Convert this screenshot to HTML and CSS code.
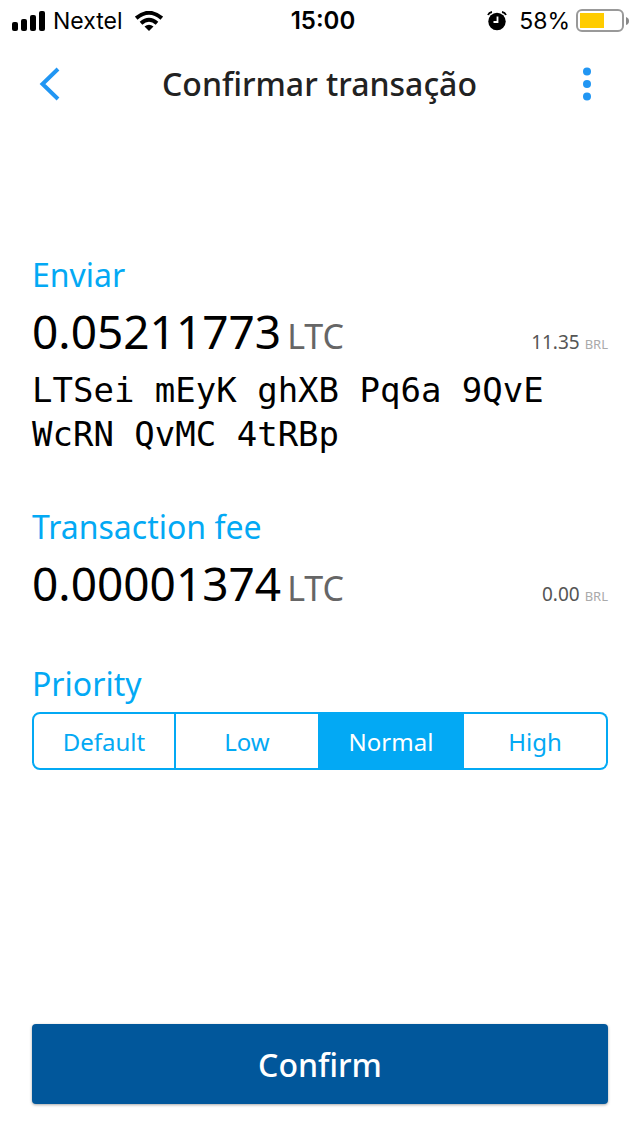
FILE: index.html
```html
<!DOCTYPE html>
<html lang="pt-BR">
<head>
<meta charset="utf-8">
<meta name="viewport" content="width=device-width, initial-scale=1">
<title>Confirmar transação</title>
<link rel="stylesheet" href="styles.css">
</head>
<body>
<div class="status">
  <div class="status-left">
    <svg class="signal" width="34" height="20" viewBox="0 0 34 20" aria-hidden="true"><rect x="0" y="11" width="6" height="9" rx="2"/><rect x="9" y="8" width="6" height="12" rx="2"/><rect x="18" y="4" width="6" height="16" rx="2"/><rect x="27" y="0" width="6" height="20" rx="2"/></svg>
    <span>Nextel</span>
    <svg class="wifi" width="28" height="20" viewBox="0 0 28 20" aria-hidden="true"><path d="M1.200 7.200Q14-3.600 26.800 7.200M6 12.200Q14 5.400 22 12.200" fill="none" stroke="#000" stroke-width="4"/><path d="M9.500 15.500Q14 12 18.500 15.500L14 20Z"/></svg>
  </div>
  <time class="clock">15:00</time>
  <div class="status-right">
    <svg class="alarm" width="20" height="20" viewBox="0 0 20 20" aria-hidden="true"><circle cx="10" cy="10.500" r="8.700"/><path d="M1 4Q2 1.500 5 1M15 1Q18 1.500 19 4" fill="none" stroke="#000" stroke-width="1.800"/><path d="M10.500 5.500V11H6.500" fill="none" stroke="#fff" stroke-width="1.800"/></svg>
    <span>58%</span>
    <svg class="battery" width="54" height="24" viewBox="0 0 54 24" aria-hidden="true"><rect x="1" y="1" width="46" height="21" rx="5" fill="none" stroke="#999" stroke-width="2"/><rect x="4" y="4" width="24" height="15" fill="#fc0"/><path d="M50 8Q53 9 53 12T50 16Z" fill="#888"/></svg>
  </div>
</div>
<header class="header">
  <button class="icon-button" type="button" aria-label="Voltar"><svg width="36" height="36" viewBox="0 0 36 36"><path d="M26 3L10.500 18L26 33" fill="none" stroke="#2196f3" stroke-width="4"/></svg></button>
  <h1 class="title">Confirmar transação</h1>
  <button class="icon-button" type="button" aria-label="Menu"><svg width="36" height="36" viewBox="0 0 36 36" fill="#2196f3"><circle cx="18" cy="5.500" r="4"/><circle cx="18" cy="18" r="4"/><circle cx="18" cy="30.500" r="4"/></svg></button>
</header>
<main class="content">
  <section class="block">
    <h2 class="label">Enviar</h2>
    <div class="row"><p class="amount">0.05211773 <span class="unit">LTC</span></p><p class="fiat">11.35 <span class="currency">BRL</span></p></div>
    <p class="address">LTSei mEyK ghXB Pq6a 9QvE WcRN QvMC 4tRBp</p>
  </section>
  <section class="block">
    <h2 class="label">Transaction fee</h2>
    <div class="row"><p class="amount">0.00001374 <span class="unit">LTC</span></p><p class="fiat">0.00 <span class="currency">BRL</span></p></div>
  </section>
  <section class="block">
    <h2 class="label" id="priority">Priority</h2>
    <div class="segments" role="radiogroup" aria-labelledby="priority">
      <label class="segment"><input type="radio" name="priority"><span>Default</span></label>
      <label class="segment"><input type="radio" name="priority"><span>Low</span></label>
      <label class="segment"><input type="radio" name="priority" checked><span>Normal</span></label>
      <label class="segment"><input type="radio" name="priority"><span>High</span></label>
    </div>
  </section>
</main>
<footer class="footer"><button class="confirm" type="button">Confirm</button></footer>
</body>
</html>
```

FILE: styles.css
```css
* { box-sizing: border-box; }
body { margin: 0; min-height: 100vh; display: flex; flex-direction: column; background: #fff; color: #000; font-family: "Noto Sans", sans-serif; }
h1, h2, p { margin: 0; font-weight: 400; }
button { border: 0; padding: 0; background: none; font: inherit; cursor: pointer; }
svg { display: block; flex: none; }

.status { display: grid; grid-template-columns: 1fr auto 1fr; align-items: center; height: 40px; padding: 0 10px 0 12px; font: 23px/42px Inter, sans-serif; }
.status-left, .status-right { display: flex; align-items: center; gap: 7px; height: 40px; }
.status-right { justify-content: flex-end; gap: 6px; }
.wifi { margin-left: 5px; }
.alarm { margin-right: 6px; }
.clock { font-size: 24px; font-weight: 600; padding-left: 4px; }

.header { display: grid; grid-template-columns: 36px 1fr 36px; align-items: center; height: 88px; padding: 0 35px 0 32px; }
.title { padding-left: 2px; text-align: center; font-size: 32px; font-weight: 500; line-height: 48px; color: #222; }

.content { flex: 1; padding: 123px 32px 0; }
.block { margin-bottom: 40px; }
.label { font-size: 32px; line-height: 48px; color: #03a9f4; }
.row { display: flex; justify-content: space-between; align-items: baseline; }
.amount { display: flex; align-items: baseline; gap: 6px; font-size: 46px; line-height: 64px; }
.unit { font-size: 34px; color: #666; }
.fiat { font-size: 19px; color: #555; }
.currency { font-size: 13px; color: #aaa; }
.address { margin-bottom: 47px; font: 34px/44px "DejaVu Sans Mono", monospace; }

.segments { display: grid; grid-template-columns: repeat(4, 1fr); height: 58px; margin-top: 4px; border-radius: 8px; }
.segment { position: relative; display: flex; align-items: center; justify-content: center; border: 2px solid #03a9f4; border-left: 0; font-size: 24px; color: #03a9f4; cursor: pointer; }
.segment:first-child { border-left: 2px solid #03a9f4; border-radius: 8px 0 0 8px; }
.segment:last-child { border-radius: 0 8px 8px 0; }
.segment input { position: absolute; inset: 0; opacity: 0; margin: 0; }
.segment:has(input:checked) { background: #03a9f4; color: #fff; }

.footer { padding: 0 32px 32px; }
.confirm { width: 100%; height: 80px; border-radius: 4px; background: #01579b; color: #fff; font-size: 32px; font-weight: 500; box-shadow: 0 1px 3px rgba(0, 0, 0, .35); }
```
